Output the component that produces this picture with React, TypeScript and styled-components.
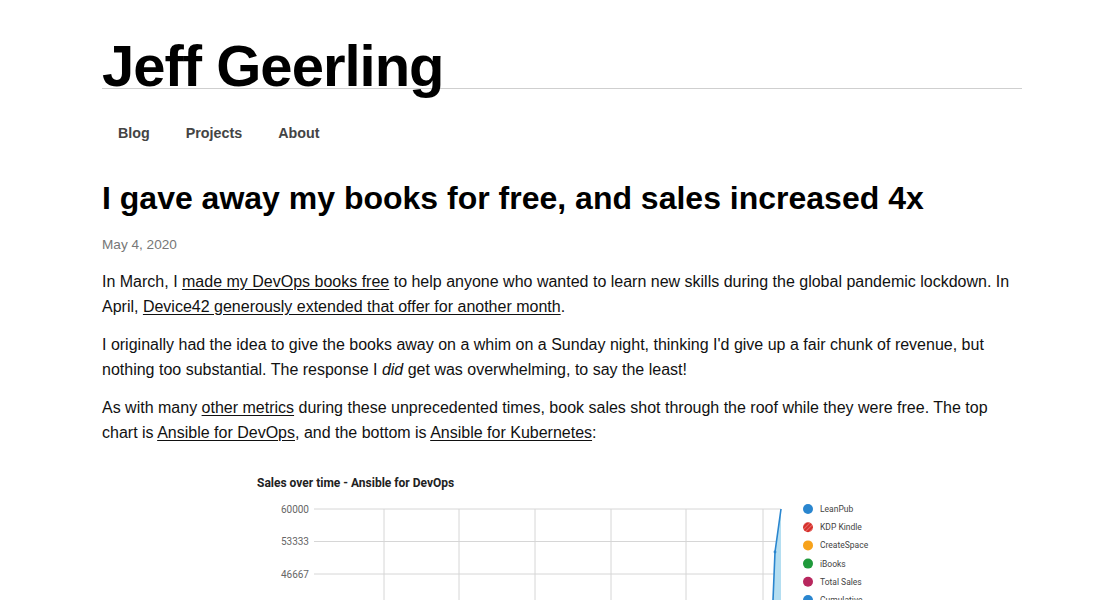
import React from "react";
import styled, { createGlobalStyle } from "styled-components";

const GlobalStyle = createGlobalStyle`
  html, body { margin: 0; padding: 0; background: #fff; }
  body {
    font-family: "Liberation Sans", Arial, Helvetica, sans-serif;
    color: #111;
    font-variant-ligatures: none;
  }
`;

const Page = styled.div`
  width: 920px;
  margin: 0 0 0 102px;
`;

const SiteHeader = styled.header`
  padding-top: 44px;
`;

const SiteTitle = styled.h1`
  margin: 0;
  font-size: 58px;
  line-height: 44px;
  height: 44px;
  font-weight: 700;
  letter-spacing: -1px;
  color: #000;
  border-bottom: 1px solid #cfcfcf;
`;

const Nav = styled.nav`
  display: flex;
  gap: 4px;
  margin-top: 34px;
`;

const NavItem = styled.a`
  padding: 0 16px;
  font-size: 14.3px;
  line-height: 20px;
  font-weight: 700;
  color: #444;
  text-decoration: none;
`;

const Article = styled.article`
  margin-top: 35px;
`;

const PostTitle = styled.h2`
  margin: 0;
  font-size: 32px;
  line-height: 40px;
  font-weight: 700;
  color: #000;
`;

const PostDate = styled.div`
  margin-top: 17px;
  font-size: 13.6px;
  line-height: 20px;
  color: #777;
`;

const Body = styled.div`
  margin-top: 14px;
`;

const Para = styled.p`
  margin: 0 0 13px;
  font-size: 16px;
  line-height: 25px;
  color: #111;
`;

const Link = styled.a`
  color: #111;
  text-decoration: underline;
  text-underline-offset: 2px;
`;

const Figure = styled.figure`
  margin: 0;
  display: flex;
  justify-content: center;
`;

const vLines = [142, 217, 293, 369, 444, 521];
const hLines = [51, 83.5, 116, 148.5, 181];
const yLabels = ["60000", "53333", "46667", "40000", "33333"];
const legend = [
  { label: "LeanPub", color: "#2a86cf" },
  { label: "KDP Kindle", color: "#d62f2a", hatch: true },
  { label: "CreateSpace", color: "#f7a21b" },
  { label: "iBooks", color: "#1f9a3b" },
  { label: "Total Sales", color: "#b8275e" },
  { label: "Cumulative", color: "#2a86cf" },
];

const Chart = () => (
  <svg width="640" height="200" viewBox="0 0 640 200">
    <defs>
      <pattern id="hatch" width="3" height="3" patternUnits="userSpaceOnUse" patternTransform="rotate(45)">
        <rect width="3" height="3" fill="#d62f2a" />
        <line x1="0" y1="0" x2="0" y2="3" stroke="#f3a0a0" strokeWidth="1" />
      </pattern>
    </defs>
    <rect width="640" height="200" fill="#fff" />
    <text x="15" y="29" fontFamily="Roboto, sans-serif" fontWeight="700" fontSize="12" fill="#222">
      Sales over time - Ansible for DevOps
    </text>
    {hLines.map((y, i) => (
      <g key={y}>
        <line x1="72" x2="539" y1={y} y2={y} stroke="#d6d6d6" strokeWidth="1" />
        <text x="67" y={y + 3.5} textAnchor="end" fontFamily="Roboto, sans-serif" fontSize="10" fill="#666">
          {yLabels[i]}
        </text>
      </g>
    ))}
    {vLines.map((x) => (
      <line key={x} x1={x} x2={x} y1="51" y2="200" stroke="#d6d6d6" strokeWidth="1" />
    ))}
    <path d="M539 51 L533 94 L531 142 L530 200 L539 200 Z" fill="#b4def1" />
    <polyline points="539,51 533,94 531,142 530,200" fill="none" stroke="#2a86cf" strokeWidth="1.6" />
    <circle cx="533" cy="94" r="1.4" fill="#2a86cf" />
    {legend.map((l, i) => (
      <g key={l.label}>
        <circle cx="566" cy={51 + i * 18.2} r="5" fill={l.hatch ? "url(#hatch)" : l.color} />
        <text x="578" y={51 + i * 18.2 + 3} fontFamily="Roboto, sans-serif" fontSize="8.5" fill="#444">
          {l.label}
        </text>
      </g>
    ))}
  </svg>
);

export default function App() {
  return (
    <>
      <GlobalStyle />
      <Page>
        <SiteHeader>
          <SiteTitle>Jeff Geerling</SiteTitle>
          <Nav>
            <NavItem href="#">Blog</NavItem>
            <NavItem href="#">Projects</NavItem>
            <NavItem href="#">About</NavItem>
          </Nav>
        </SiteHeader>
        <Article>
          <PostTitle>I gave away my books for free, and sales increased 4x</PostTitle>
          <PostDate>May 4, 2020</PostDate>
          <Body>
            <Para>
              In March, I <Link href="#">made my DevOps books free</Link> to help anyone who wanted to learn new
              skills during the global pandemic lockdown. In April,{" "}
              <Link href="#">Device42 generously extended that offer for another month</Link>.
            </Para>
            <Para>
              I originally had the idea to give the books away on a whim on a Sunday night, thinking I'd give up a
              fair chunk of revenue, but nothing too substantial. The response I <em>did</em> get was overwhelming,
              to say the least!
            </Para>
            <Para>
              As with many <Link href="#">other metrics</Link> during these unprecedented times, book sales shot
              through the roof while they were free. The top chart is <Link href="#">Ansible for DevOps</Link>, and
              the bottom is <Link href="#">Ansible for Kubernetes</Link>:
            </Para>
            <Figure>
              <Chart />
            </Figure>
          </Body>
        </Article>
      </Page>
    </>
  );
}
